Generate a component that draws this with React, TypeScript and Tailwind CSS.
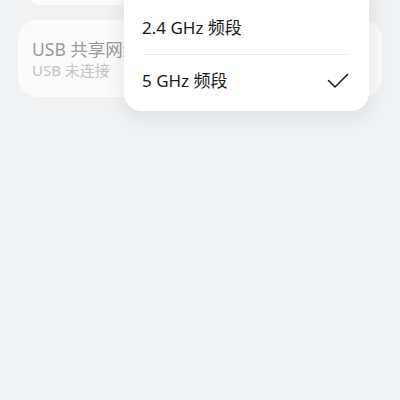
import React from "react";

export default function App() {
  return (
    <div
      className="relative w-[400px] h-[400px] overflow-hidden bg-[#f1f2f4]"
      style={{ fontFamily: '"Noto Sans", "Noto Sans CJK SC", sans-serif' }}
    >
      <div className="flex flex-col gap-[15px] px-[18px]">
        <div className="-mt-[60px] h-[65px] mx-[6px] rounded-[18px] bg-[#fbfbfb]" />
        <div className="h-[77px] rounded-[20px] bg-[#fbfbfc] flex flex-col justify-center pl-[14px]">
          <div className="text-[17.5px] leading-[22px] text-[#9c9c9c]">USB 共享网络</div>
          <div className="text-[15px] leading-[19px] mt-[1px] text-[#c4c4c4]">USB 未连接</div>
        </div>
      </div>

      <div className="absolute left-[124px] top-[-20px] w-[245px] rounded-[18px] bg-white shadow-[0_4px_24px_rgba(0,0,0,0.10)] pt-[22px] pb-[4px]">
        <div className="h-[52px] flex items-center px-[18px]">
          <span className="text-[17px] text-[#1a1a1a]">2.4 GHz 频段</span>
        </div>
        <div className="mx-[20px] h-px bg-[#e9e9ea]" />
        <div className="h-[52px] flex items-center justify-between pl-[18px] pr-[20px]">
          <span className="text-[17px] text-[#1a1a1a]">5 GHz 频段</span>
          <svg width="22" height="16" viewBox="0 0 22 16" fill="none">
            <path d="M1.5 7.5 L8 14 L20.5 1.5" stroke="#1a1a1a" strokeWidth="1.5" strokeLinecap="round" strokeLinejoin="round" />
          </svg>
        </div>
      </div>
    </div>
  );
}
